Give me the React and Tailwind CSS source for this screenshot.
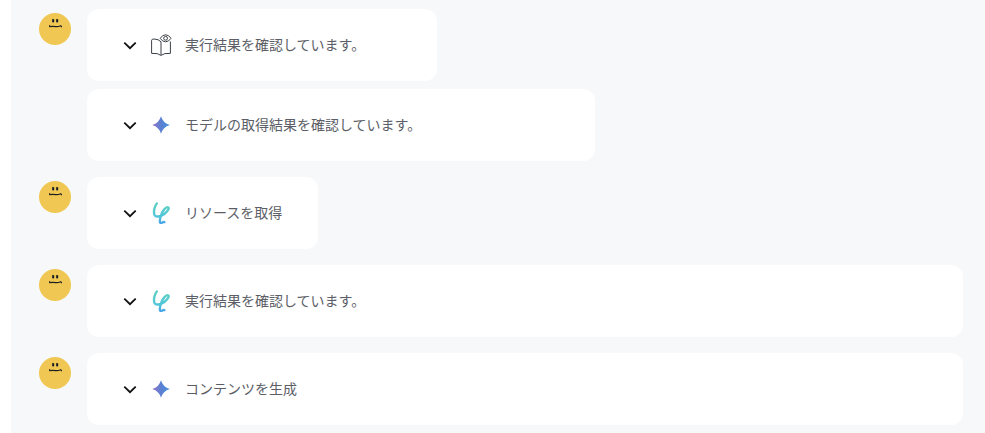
function Avatar() {
  return (
    <svg viewBox="0 0 32 32" className="mt-1 h-8 w-8 shrink-0" aria-hidden="true">
      <circle cx="16" cy="16" r="16" fill="#efc752" />
      <rect x="13.1" y="6" width="2.1" height="3.6" rx="0.8" fill="#222" />
      <rect x="17.1" y="6" width="2.1" height="3.6" rx="0.8" fill="#222" />
      <path d="M10.6 12.6 L10.8 13.6 Q14 13.2 16.5 13.6 Q19.5 13.8 21.8 12.7 L22.5 13.8" fill="none" stroke="#222" strokeWidth="1.2" strokeLinecap="round" />
    </svg>
  );
}

function Chevron() {
  return (
    <svg viewBox="0 0 14 14" className="h-3.5 w-3.5 shrink-0" fill="none" stroke="#111" strokeWidth="1.8" aria-hidden="true">
      <path d="M1.3 4.6 L7 10.2 L12.7 4.6" />
    </svg>
  );
}

function BookIcon() {
  return (
    <svg viewBox="0 0 22 22" className="h-[22px] w-[22px] shrink-0" fill="none" stroke="#3c4147" strokeWidth="1" strokeLinejoin="round" aria-hidden="true">
      <path d="M11 7.8 Q8.5 5 4 5 Q1.6 5 1.6 6.2 V19.4 Q8 18.8 11 21.4 Q14 18.8 20.4 19.4 V7.5" />
      <path d="M11 7.8 V21" />
      <path d="M10.2 4.3 Q12.4 0.8 15.6 0.8 Q18.8 0.8 21 4.3 Q18.8 7.8 15.6 7.8 Q12.4 7.8 10.2 4.3 Z" fill="#fff" />
      <circle cx="15.6" cy="4.3" r="1.9" />
    </svg>
  );
}

function SparkIcon() {
  return (
    <svg viewBox="0 0 22 22" className="h-[22px] w-[22px] shrink-0" aria-hidden="true">
      <defs>
        <linearGradient id="spark" x1="0" y1="0" x2="1" y2="0">
          <stop offset="0.1" stopColor="#8a78c8" />
          <stop offset="0.5" stopColor="#5b80d2" />
          <stop offset="1" stopColor="#4493dc" />
        </linearGradient>
      </defs>
      <path d="M11 2.2 Q13 9 19.8 11 Q13 13 11 19.8 Q9 13 2.2 11 Q9 9 11 2.2 Z" fill="url(#spark)" />
    </svg>
  );
}

function LoopIcon() {
  return (
    <svg viewBox="0 0 22 22" className="h-[22px] w-[22px] shrink-0" fill="none" aria-hidden="true">
      <defs>
        <linearGradient id="loop" gradientUnits="userSpaceOnUse" x1="10" y1="0" x2="10" y2="22">
          <stop offset="0.2" stopColor="#5ad0c4" />
          <stop offset="0.7" stopColor="#51c4dc" />
          <stop offset="1" stopColor="#459fe8" />
        </linearGradient>
      </defs>
      <path
        d="M6.8 1.5 C4.6 4 3.4 9.6 4.4 12.6 C5.6 15.6 10.4 14.8 14 12.2 C17.8 9.4 19.4 6.6 18.2 5.4 C16.4 4 12 9 10.6 14.5 C9.6 18.6 9.4 21 11 21 C12.2 21 12.8 19.6 14.4 20.1"
        stroke="url(#loop)"
        strokeWidth="2.4"
        strokeLinecap="round"
        strokeLinejoin="round"
      />
    </svg>
  );
}

const groups = [
  [
    { label: '実行結果を確認しています。', Icon: BookIcon, width: 'w-[350px]' },
    { label: 'モデルの取得結果を確認しています。', Icon: SparkIcon, width: 'w-[508px]' },
  ],
  [{ label: 'リソースを取得', Icon: LoopIcon, width: 'w-[231px]' }],
  [{ label: '実行結果を確認しています。', Icon: LoopIcon, width: 'w-full' }],
  [{ label: 'コンテンツを生成', Icon: SparkIcon, width: 'w-full' }],
];

function StepCard({ label, Icon, width }) {
  return (
    <button
      type="button"
      aria-expanded="false"
      className={`flex max-w-full items-start rounded-xl bg-white py-6 pr-6 pl-9 text-left ${width}`}
    >
      <span className="mr-[13px] flex h-6 items-center gap-[13px]">
        <Chevron />
        <Icon />
      </span>
      <span className="text-sm leading-[22px] text-[#5b5e66]">{label}</span>
    </button>
  );
}

function App() {
  return (
    <div className="bg-white pl-[11px] font-['Noto_Sans_CJK_JP',sans-serif]">
      <main lang="ja" className="flex min-h-screen flex-col gap-4 bg-[#f7f8fa] pt-[9px] pr-[22px] pb-2 pl-7">
        {groups.map((steps, i) => (
          <div key={i} className="flex gap-4">
            <Avatar />
            <div className="flex min-w-0 flex-1 flex-col gap-2">
              {steps.map((step) => (
                <StepCard key={step.label} {...step} />
              ))}
            </div>
          </div>
        ))}
      </main>
    </div>
  );
}

export default App;
